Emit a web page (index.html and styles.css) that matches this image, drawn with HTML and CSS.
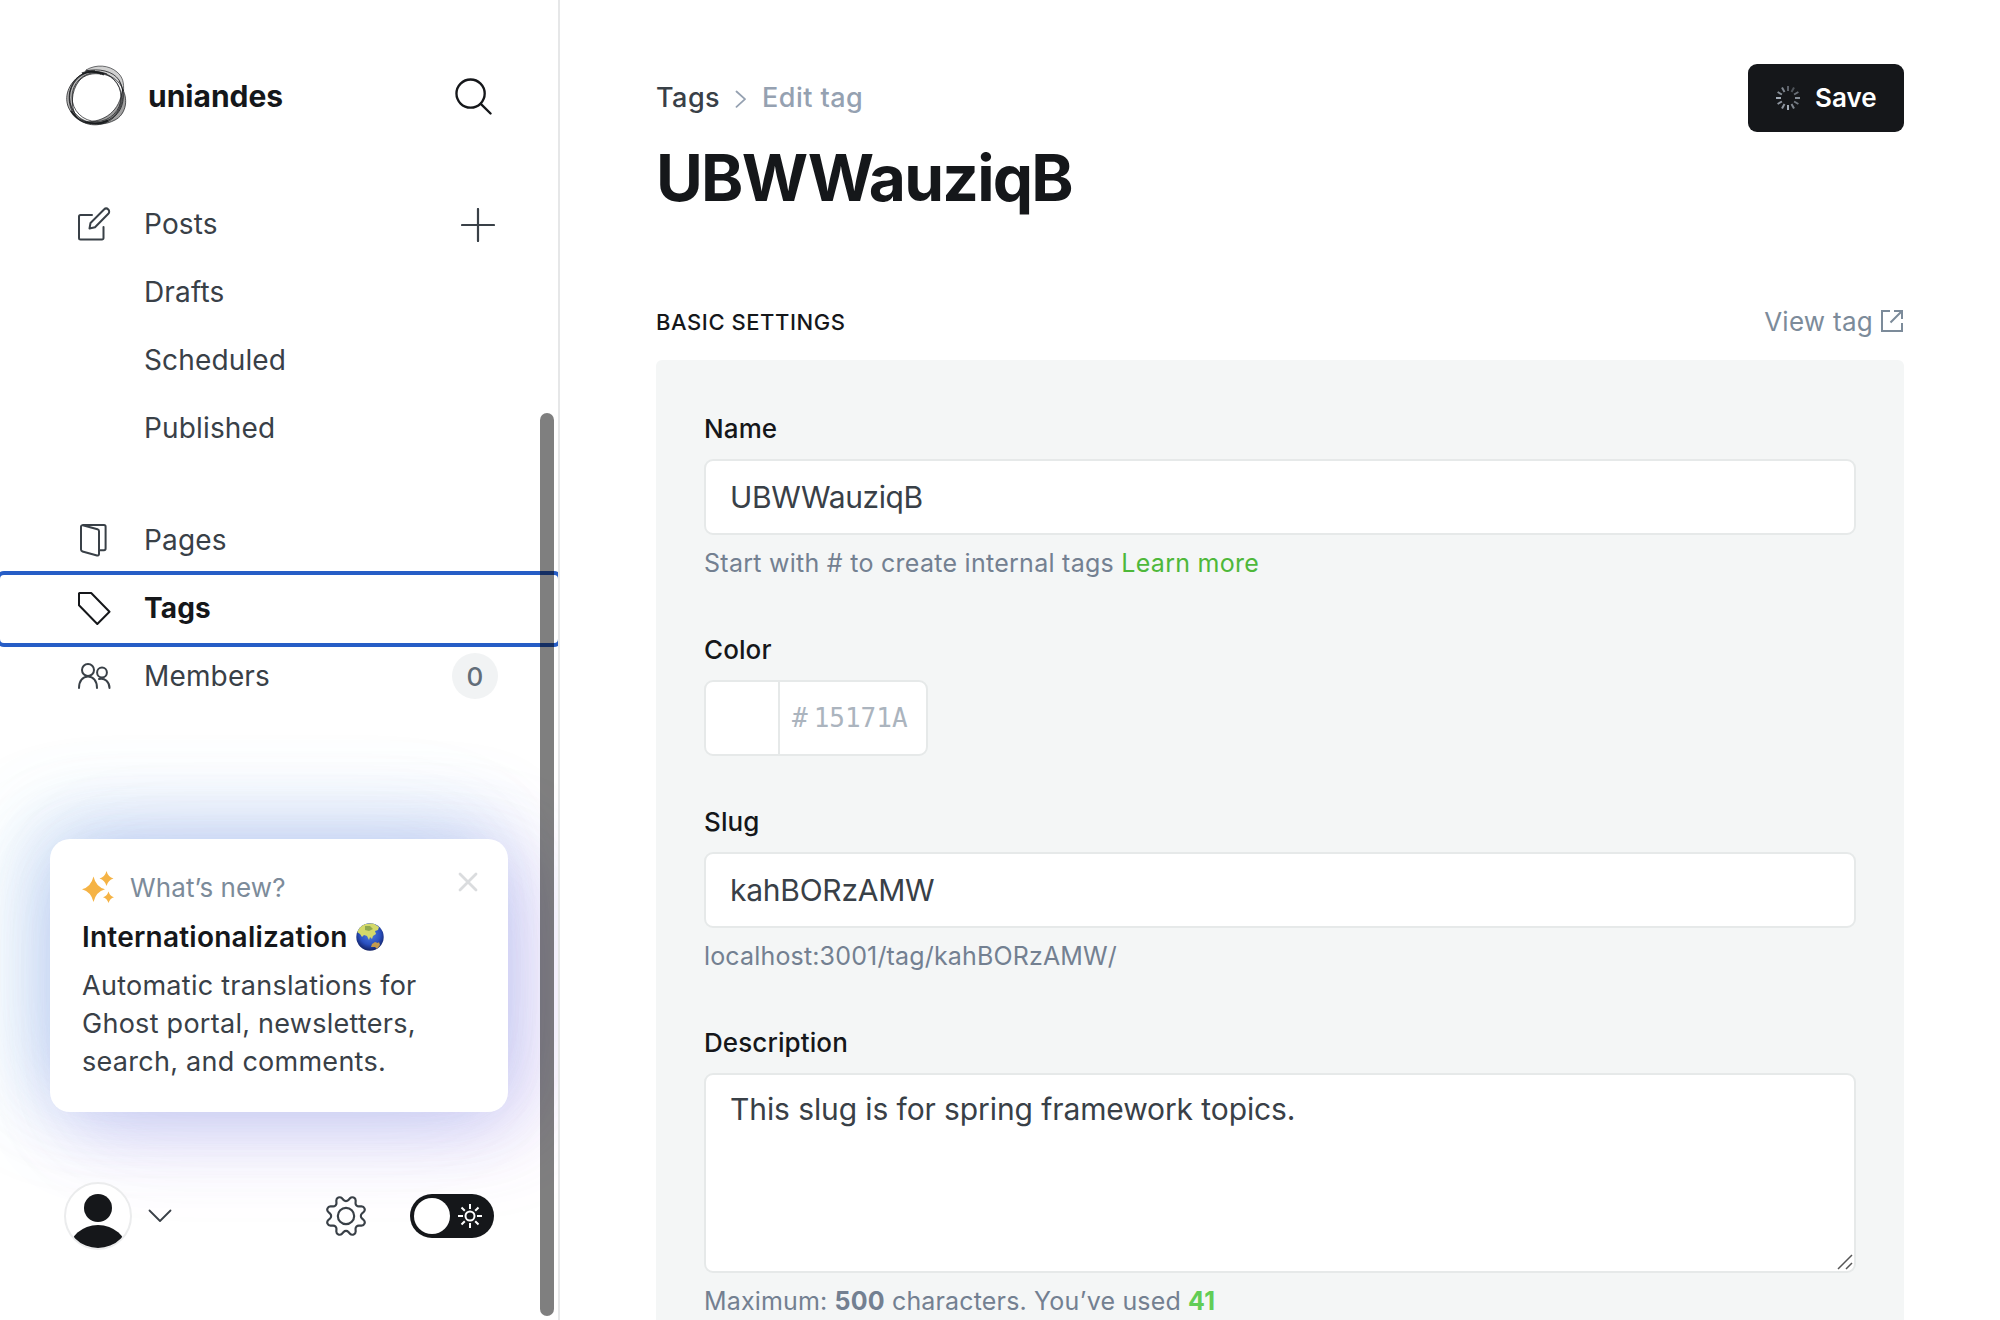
FILE: index.html
```html
<!DOCTYPE html>
<html lang="en">
<head>
<meta charset="utf-8">
<title>Edit tag</title>
<link rel="stylesheet" href="styles.css">
</head>
<body>
<div class="app">
  <aside class="sidebar">
    <header class="site">
      <svg class="site-logo" viewBox="0 0 62 62" fill="none" stroke="#15171a" stroke-width="1">
        <path fill="#8c8c8c" fill-opacity=".6" stroke-opacity=".75" d="M36 9C26 4 15 8 8 17-1 28 0 42 9 50l3 3C5 42 6 26 14 16c6-7 14-8 22-7z"/>
        <path fill="#bdbdbd" fill-opacity=".7" stroke-opacity=".6" d="M21 5C31-1 44 0 52 7c6 5 7 11 6.500 19C54 14 45 10 36 9 29 7 26 7 21 5z"/>
        <path fill="#8a8a8a" fill-opacity=".8" stroke-opacity=".7" d="M57.500 24C64 36 60 50 50 55 41 60 30 60 20 57c20 0 35-11 37.500-33z"/>
        <path stroke-opacity=".75" d="M20 6c14-3 28 0 34 9 7 13 5 27-3 35-10 12-28 13-39 3C2 43 1 24 12 13 20 5 32 6 42 9"/>
        <path stroke-opacity=".6" d="M30 5.500C18 6 8 14 5 27 3 42 10 53 24 57c13 3 26-2 31-14 4-9 4-20-1-27"/>
        <ellipse cx="31.500" cy="32" rx="24.500" ry="24.500" stroke-opacity=".7"/>
        <ellipse cx="30.500" cy="32.500" rx="26" ry="26" stroke-opacity=".6"/>
        <path stroke-width="2" stroke-opacity=".85" d="M6 46c5 8 13 12.500 24 12.500 6 0 9-1 13-3M17 8.500c6-3 15-2.500 22 1"/>
      </svg>
      <span class="site-name">uniandes</span>
      <svg class="search" viewBox="0 0 38 38" fill="none" stroke="#15171a" stroke-width="2.400" stroke-linecap="round"><circle cx="16" cy="16" r="14.500"/><path d="M26.500 26.500 36.500 36.500"/></svg>
    </header>

    <nav class="nav">
      <a class="nav-row">
        <svg class="nav-icon" viewBox="0 0 34 34" fill="none" stroke="#394047" stroke-width="2" stroke-linejoin="round" stroke-linecap="round"><path d="M15 8H3.500A1.500 1.500 0 0 0 2 9.500V31a1.500 1.500 0 0 0 1.500 1.500H25a1.500 1.500 0 0 0 1.500-1.500V20"/><path d="M12.500 21.500l1-5.500L27 2.500a2.900 2.900 0 0 1 4.300 4.300L18 20.300z"/></svg>
        <span>Posts</span>
        <svg class="plus" viewBox="0 0 34 34" stroke="#394047" stroke-width="2.200" stroke-linecap="round"><path d="M17 1v32M1 17h32"/></svg>
      </a>
      <a class="nav-row sub"><span>Drafts</span></a>
      <a class="nav-row sub"><span>Scheduled</span></a>
      <a class="nav-row sub"><span>Published</span></a>
      <a class="nav-row spaced">
        <svg class="nav-icon" viewBox="0 0 34 34" fill="none" stroke="#394047" stroke-width="2" stroke-linejoin="round"><path d="M5.500 2H27a1.600 1.600 0 0 1 1.600 1.600v22a1.600 1.600 0 0 1-1.600 1.600h-4"/><path d="M5.800 2.200 20.500 6.200A2 2 0 0 1 22 8v23a1.500 1.500 0 0 1-2 1.500L5.500 28.500A2 2 0 0 1 4 26.600V3.600a1.400 1.400 0 0 1 1.800-1.400z"/></svg>
        <span>Pages</span>
      </a>
      <a class="nav-row active">
        <svg class="nav-icon" viewBox="0 0 34 34" fill="none" stroke="#15171a" stroke-width="2" stroke-linejoin="round"><path d="M2.500 2H14.200L32.500 20.800 20.300 33 2 14.300V2.500z"/></svg>
        <span>Tags</span>
      </a>
      <a class="nav-row">
        <svg class="nav-icon" viewBox="0 0 34 34" fill="none" stroke="#394047" stroke-width="2" stroke-linecap="round"><circle cx="11" cy="11" r="6"/><path d="M2 29c0-7 3.700-11.500 9-11.500s9 4.500 9 11.500"/><circle cx="25" cy="13.500" r="4.900"/><path d="M22 20c6-1.500 10.500 3 10.500 9"/></svg>
        <span>Members</span>
        <b class="count">0</b>
      </a>
    </nav>

    <section class="news">
      <div class="news-head">
        <svg class="sparkle" viewBox="0 0 32 32" fill="#f5b345"><path d="M11.500 5.500q2.400 10.300 11.500 12.800-9.100 2.500-11.500 12.800Q9.100 20.800 0 18.300q9.100-2.500 11.500-12.800z"/><path d="M24.500 0q1.600 6 7 7.500-5.400 1.500-7 7.500-1.600-6-7-7.500 5.400-1.500 7-7.500z"/><path d="M26.500 20.500q1.400 4.500 5.500 5.800-4.100 1.300-5.500 5.700-1.400-4.400-5.500-5.700 4.100-1.300 5.500-5.800z"/></svg>
        <span>What’s new?</span>
        <svg class="close" viewBox="0 0 20 20" stroke="#dadcde" stroke-width="2.800" stroke-linecap="round"><path d="M2 2l16 16M18 2 2 18"/></svg>
      </div>
      <h2 class="news-title"><span>Internationalization</span>
        <svg class="globe" viewBox="0 0 28 28">
          <defs><radialGradient id="sea" cx=".5" cy=".4" r=".62"><stop offset="0" stop-color="#4e7fe0"/><stop offset=".6" stop-color="#2a50c0"/><stop offset="1" stop-color="#101d5c"/></radialGradient><clipPath id="disc"><circle cx="14" cy="14" r="13.700"/></clipPath></defs>
          <circle cx="14" cy="14" r="13.700" fill="url(#sea)"/>
          <g clip-path="url(#disc)"><path fill="#d3d96a" d="M1 9Q3 3 9 1l8-1 6 4-1 3-3 1 1 3-3 2-1 3-2-2-1 3-2-4-3-1-2 2-2-3z"/><path fill="#8fa850" d="M9 3l5 0 3 3-4 2-4-1z"/><path fill="#c39a4e" d="M16 21l3-2 3 1 1-1 1 3-3 4-2-2-4 0z"/></g>
        </svg>
      </h2>
      <p class="news-body">Automatic translations for<br>Ghost portal, newsletters,<br>search, and comments.</p>
    </section>

    <footer class="account">
      <svg class="avatar" viewBox="0 0 68 68"><defs><clipPath id="face"><circle cx="34" cy="34" r="32"/></clipPath></defs><circle cx="34" cy="34" r="33" fill="#fff" stroke="#ebeced" stroke-width="2"/><g fill="#15171a" clip-path="url(#face)"><circle cx="34" cy="26" r="14"/><ellipse cx="34" cy="69" rx="29" ry="26"/></g></svg>
      <svg class="chev" viewBox="0 0 24 14" fill="none" stroke="#394047" stroke-width="1.800" stroke-linecap="round" stroke-linejoin="round"><path d="M1.500 1.500 12 12 22.500 1.500"/></svg>
      <svg class="gear" viewBox="0 0 24 24" fill="none" stroke="#394047" stroke-width="1.300" stroke-linejoin="round"><circle cx="12" cy="12" r="4.900"/><path d="M10.546 2.438a1.957 1.957 0 0 0 2.908 0L14.400 1.400a1.959 1.959 0 0 1 3.400 1.407l-.071 1.400a1.958 1.958 0 0 0 2.064 2.064l1.400-.071A1.959 1.959 0 0 1 22.600 9.600l-1.040.942a1.961 1.961 0 0 0 0 2.912l1.040.946a1.959 1.959 0 0 1-1.407 3.400l-1.400-.071a1.958 1.958 0 0 0-2.064 2.064l.071 1.400A1.959 1.959 0 0 1 14.400 22.600l-.941-1.040a1.959 1.959 0 0 0-2.908 0L9.600 22.600a1.959 1.959 0 0 1-3.400-1.407l.071-1.400a1.958 1.958 0 0 0-2.064-2.064l-1.400.071A1.958 1.958 0 0 1 1.400 14.400l1.040-.941a1.960 1.960 0 0 0 0-2.912L1.400 9.600a1.958 1.958 0 0 1 1.407-3.400l1.400.071A1.958 1.958 0 0 0 6.270 4.207l-.07-1.400A1.959 1.959 0 0 1 9.600 1.400z"/></svg>
      <div class="toggle"><svg class="sun" viewBox="0 0 24 24" fill="none" stroke="#fff" stroke-width="2"><circle cx="12" cy="12" r="4.500"/><path d="M12 0v5M12 19v5M0 12h5M19 12h5M3.500 3.500l3.300 3.300M17.200 17.200l3.300 3.300M3.500 20.500l3.300-3.300M17.200 6.800l3.300-3.300"/></svg></div>
    </footer>
    <div class="scrollbar"></div>
  </aside>

  <main class="main">
    <header class="top">
      <div class="crumbs">
        <span class="crumb-link">Tags</span>
        <svg class="crumb-sep" viewBox="0 0 12 18" fill="none" stroke="#95a1b1" stroke-width="1.800" stroke-linecap="round" stroke-linejoin="round"><path d="M1.500 1.500 10 9.200 1.500 16.800"/></svg>
        <span class="crumb-here">Edit tag</span>
      </div>
      <button class="save">
        <svg class="spinner" viewBox="-12 -12 24 24" stroke="#a3acb7" stroke-width="2"><path d="M0-12v5" stroke-opacity=".5"/><path d="M0-12v5" transform="rotate(30)" stroke-opacity=".4"/><path d="M0-12v5" transform="rotate(60)" stroke-opacity=".6"/><path d="M0-12v5" transform="rotate(90)" stroke-opacity=".8"/><path d="M0-12v5" transform="rotate(120)" stroke-opacity=".65"/><path d="M0-12v5" transform="rotate(150)" stroke-opacity=".75"/><path d="M0-12v5" transform="rotate(180)"/><path d="M0-12v5" transform="rotate(210)" stroke-opacity=".85"/><path d="M0-12v5" transform="rotate(240)" stroke-opacity=".85"/><path d="M0-12v5" transform="rotate(270)"/><path d="M0-12v5" transform="rotate(300)" stroke-opacity=".8"/><path d="M0-12v5" transform="rotate(330)" stroke-opacity=".75"/></svg>
        <span>Save</span>
      </button>
    </header>
    <h1 class="title">UBWWauziqB</h1>
    <div class="section-head">
      <h4 class="section-title">Basic settings</h4>
      <a class="view"><span>View tag</span><svg class="ext" viewBox="0 0 22 22" fill="none" stroke="#7c8b9a" stroke-width="2"><path d="M9 1H1v20h20v-8M13 1h8v8M21 1 9.500 12.500"/></svg></a>
    </div>
    <form class="panel">
      <div class="field f-name">
        <label class="label">Name</label>
        <div class="input">UBWWauziqB</div>
        <p class="hint">Start with # to create internal tags <a class="learn">Learn more</a></p>
      </div>
      <div class="field f-color">
        <label class="label">Color</label>
        <div class="color"><i class="swatch"></i><div class="hex"><span>#</span><span>15171A</span></div></div>
      </div>
      <div class="field f-slug">
        <label class="label">Slug</label>
        <div class="input">kahBORzAMW</div>
        <p class="hint">localhost:3001/tag/kahBORzAMW/</p>
      </div>
      <div class="field f-desc">
        <label class="label">Description</label>
        <div class="input area">This slug is for spring framework topics.
          <svg class="grip" viewBox="0 0 16 16" stroke="#555" stroke-width="1.500"><path d="M1 15 15 1M9 15l6-6"/></svg></div>
        <p class="hint">Maximum: <b>500</b> characters. You’ve used <b class="ok">41</b></p>
      </div>
    </form>
  </main>
</div>
</body>
</html>
```
FILE: styles.css
```css
* { box-sizing: border-box; }
body { margin: 0; background: #fff; font-family: Inter, "Liberation Sans", sans-serif; color: #394047; }
h1, h2, h4, p { margin: 0; }
svg { display: block; flex: none; }

.app { display: flex; width: 2000px; height: 1320px; overflow: hidden; }

/* Sidebar */
.sidebar { position: relative; display: flex; flex-direction: column; width: 560px; height: 1320px; flex: none; border-right: 2px solid #e6e7e8; overflow: hidden; }
.site { display: flex; align-items: center; height: 64px; margin-top: 64px; padding: 0 66px 0 65px; }
.site-logo { width: 62px; height: 62px; }
.site-name { margin-left: 21px; font-size: 30px; font-weight: 700; color: #15171a; }
.search { width: 37px; height: 37px; margin-left: auto; }

.nav { margin-top: 63px; }
.nav-row { display: flex; align-items: center; height: 68px; padding: 0 60px 0 77px; font-size: 28px; letter-spacing: .15px; }
.nav-row span { margin-left: 33px; padding-bottom: 2px; }
.nav-row.sub { padding-left: 111px; }
.nav-row.spaced { margin-top: 44px; }
.nav-row.active { font-weight: 700; color: #15171a; outline: 4px solid #265dc6; border-radius: 4px; }
.nav-icon { width: 34px; height: 34px; margin-bottom: 2px; }
.plus { width: 34px; height: 34px; margin-left: auto; margin-right: 3px; }
.count { display: flex; align-items: center; justify-content: center; width: 46px; height: 46px; margin: -2px 0 0 auto; border-radius: 50%; background: #f1f3f4; font-size: 26px; font-weight: 500; color: #626d79; }

.news { width: 458px; height: 273px; margin: 128px 0 0 50px; padding: 32px; border-radius: 20px; background: #fff;
  box-shadow: -10px -16px 80px rgba(95, 150, 225, .28), 12px 16px 80px rgba(105, 90, 225, .24), -34px -10px 110px rgba(120, 225, 225, .1), 34px 16px 110px rgba(225, 120, 230, .1); }
.news-head { display: flex; align-items: center; height: 32px; font-size: 26px; color: #7c8b9a; letter-spacing: .1px; }
.sparkle { width: 32px; height: 32px; }
.news-head span { margin-left: 16px; }
.close { width: 20px; height: 20px; margin: -10px -2px 0 auto; }
.news-title { display: flex; align-items: center; gap: 8px; height: 34px; margin-top: 17px; font-size: 28px; font-weight: 600; letter-spacing: .23px; color: #15171a; }
.globe { width: 28px; height: 28px; }
.news-body { margin-top: 13px; font-size: 27px; line-height: 38px; letter-spacing: .27px; }

.account { position: relative; display: flex; align-items: center; height: 68px; margin-top: 70px; padding: 0 64px; }
.avatar { width: 68px; height: 68px; }
.chev { width: 24px; height: 14px; margin-left: 16px; }
.gear { width: 40px; height: 40px; margin-left: auto; }
.toggle { display: flex; align-items: center; justify-content: space-between; width: 84px; height: 44px; margin-left: 44px; padding: 0 12px 0 4px; border-radius: 22px; background: #15171a; }
.toggle::before { content: ""; width: 36px; height: 36px; border-radius: 50%; background: #fff; }
.sun { width: 24px; height: 24px; }
.scrollbar { position: absolute; left: 540px; top: 413px; width: 14px; height: 903px; border-radius: 7px; background: rgba(0, 0, 0, .5); }

/* Editor */
.main { flex: 1; padding: 64px 96px 0; }
.top { display: flex; justify-content: space-between; height: 68px; }
.crumbs { display: flex; align-items: center; height: 66px; font-size: 27px; font-weight: 500; letter-spacing: .45px; }
.crumb-sep { width: 12px; height: 18px; margin: 4px 15px 0; }
.crumb-here { color: #95a1b1; }
.save { display: flex; align-items: center; width: 156px; height: 68px; padding: 0 0 0 28px; border: 0; border-radius: 9px; background: #15171a; color: #fff; font: 600 26px Inter, sans-serif; }
.spinner { width: 24px; height: 24px; }
.save span { margin-left: 15px; padding-bottom: 2px; }
.title { height: 78px; margin-top: 7px; font-size: 64px; line-height: 78px; font-weight: 700; letter-spacing: -1.75px; color: #15171a; }
.section-head { display: flex; justify-content: space-between; align-items: center; height: 40px; margin: 85px 0 18px; }
.section-title { font-size: 22px; font-weight: 500; letter-spacing: .56px; text-transform: uppercase; color: #15171a; }
.view { display: flex; align-items: center; padding: 0 1px 2px 0; font-size: 26px; letter-spacing: .27px; color: #7c8b9a; }
.ext { width: 22px; height: 22px; margin-left: 8px; }

.panel { height: 1000px; padding: 51px 48px; border-radius: 6px; background: #f4f6f6; }
.field { height: 221px; }
.f-color { height: 172px; }
.label { display: block; height: 48px; line-height: 36px; font-size: 26px; font-weight: 500; letter-spacing: .1px; color: #15171a; }
.input { position: relative; height: 76px; padding: 0 24px; border: 2px solid #e6e9e9; border-radius: 9px; background: #fff; font-size: 30px; line-height: 72px; letter-spacing: -.4px; }
.f-slug .input { letter-spacing: -.25px; }
.f-desc .area { height: 200px; line-height: 68px; letter-spacing: -.1px; }
.grip { position: absolute; right: 1px; bottom: 1px; width: 16px; height: 16px; }
.hint { height: 40px; margin-top: 8px; font-size: 25px; line-height: 40px; letter-spacing: .16px; color: #738091; }
.f-name .hint { letter-spacing: .27px; }
.learn { color: #4eb83a; }
.ok { color: #62cd55; }
.color { display: flex; width: 224px; height: 76px; border: 2px solid #e6e9e9; border-radius: 9px; background: #fff; overflow: hidden; }
.swatch { width: 74px; border-right: 2px solid #e6e9e9; }
.hex { display: flex; gap: 6px; padding-left: 12px; font: 26px/72px "DejaVu Sans Mono", monospace; color: #abb4be; }
```
